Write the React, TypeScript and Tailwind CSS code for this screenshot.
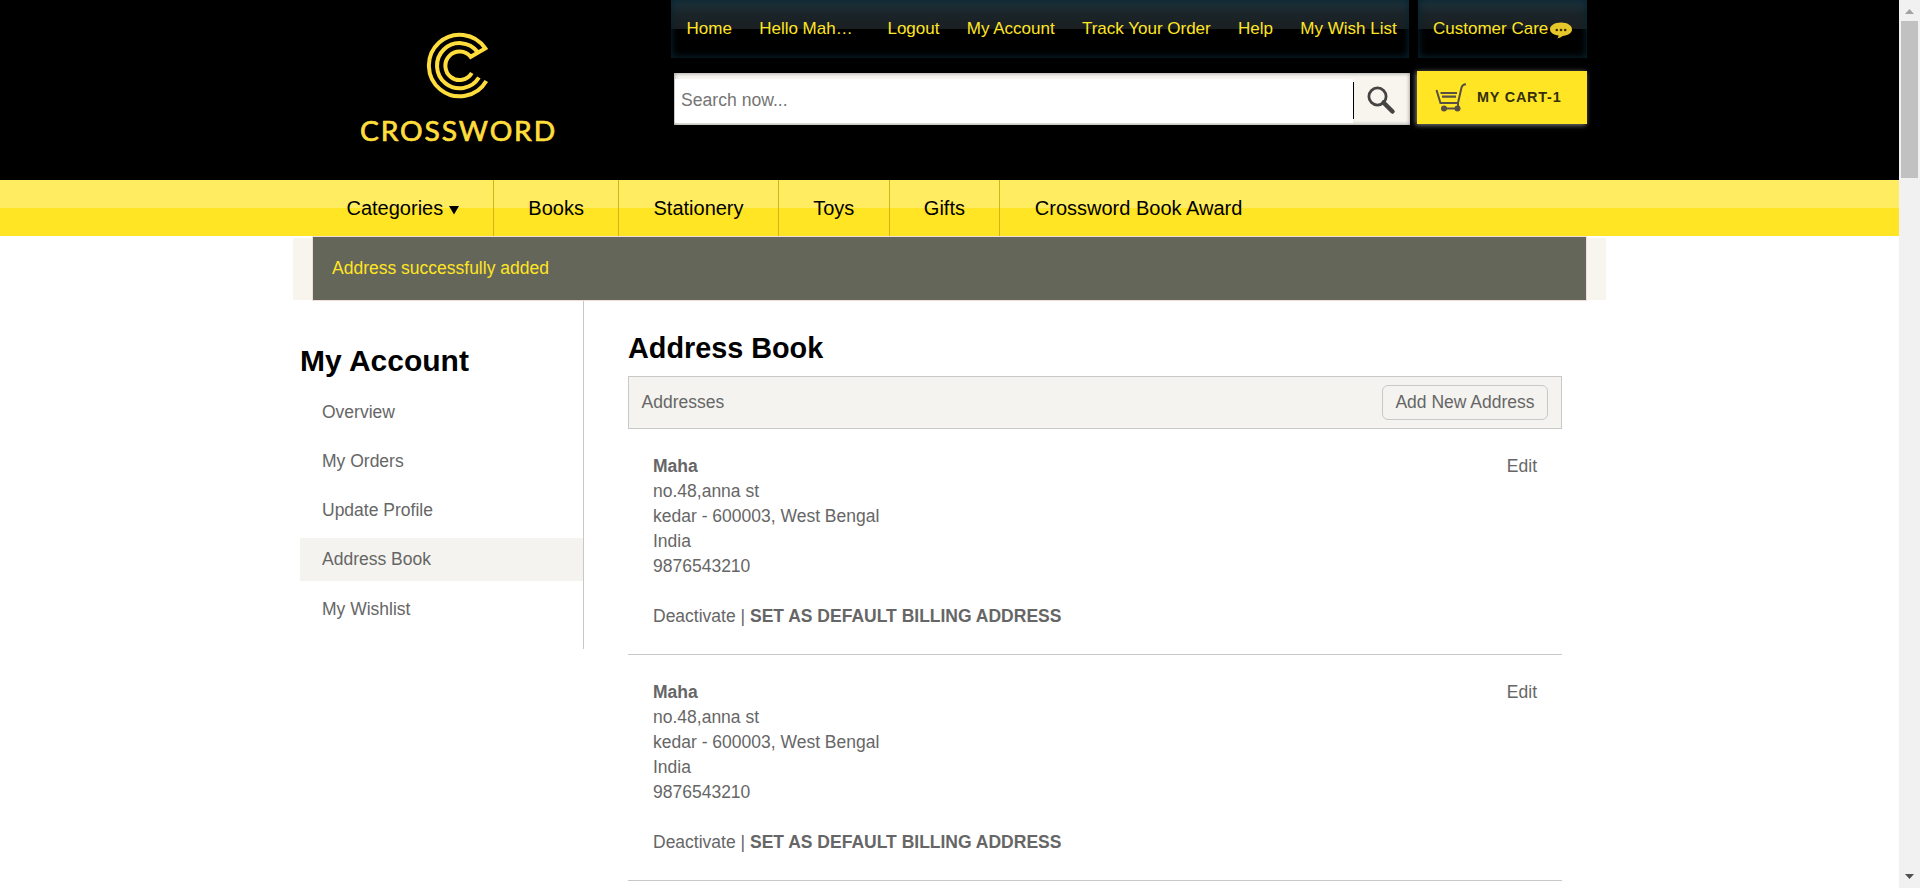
import React from "react";

const topLinks = ["Logout", "My Account", "Track Your Order", "Help", "My Wish List"];
const categories = ["Books", "Stationery", "Toys", "Gifts"];
const accountLinks = ["Overview", "My Orders", "Update Profile", "Address Book", "My Wishlist"];
const addresses = [1, 2];

const glossy =
  "bg-[linear-gradient(#1f353e_0px,#1a2429_14px,#1a1f21_29px,#000_29px)] shadow-[inset_0_0_7px_1px_#06232f]";

function Logo() {
  return (
    <div className="ml-[359px] flex w-[199px] flex-col items-center pt-8">
      <svg width="68" height="68" viewBox="426 32 68 68" fill="none" stroke="#ffdd3c" strokeWidth="4" className="ml-0.5">
        <path d="M486.3 81A30.8 30.8 0 1 1 485.3 48.4L470.6 56.8A14.2 14.2 0 1 0 471.8 73" />
        <path d="M478.9 77.5A22.6 22.6 0 1 1 477.6 52" />
      </svg>
      <svg width="199" height="36" viewBox="0 0 199 36" className="mt-3">
        <text x="1" y="28.600" textLength="197" lengthAdjust="spacingAndGlyphs" fill="#ffdd3c" stroke="#ffdd3c" strokeWidth="0.7" className="font-['Lato',sans-serif] text-[27px] tracking-[1.800px]">
          CROSSWORD
        </text>
      </svg>
    </div>
  );
}

function TopLinks() {
  return (
    <div className="flex gap-[9px] text-[17px] leading-5 text-[#ffe524]">
      <nav className={`flex h-[58px] w-[738px] gap-[27.300px] whitespace-nowrap pl-[15.500px] pt-[19px] ${glossy}`}>
        <a>Home</a>
        <a className="w-[101px]">Hello Mah…</a>
        {topLinks.map((l) => (
          <a key={l}>{l}</a>
        ))}
      </nav>
      <div className={`flex h-[58px] w-[169px] whitespace-nowrap pl-[15px] pt-[19px] ${glossy}`}>
        <span>Customer Care</span>
        <svg width="24" height="18" viewBox="0 0 24 18" className="ml-px mt-[3px]">
          <path d="M12 .5c6.300 0 11 2.900 11 6.800s-4.400 6.300-9.500 6.600c-1.500 1.400-3 2-5.300 2.500 1-.8 1.400-1.800 1.300-2.900C4.700 13 1 10.800 1 7.300 1 3.400 5.700.5 12 .5z" fill="#e5c62b" />
          <circle cx="7.800" cy="8" r="1.300" fill="#3a3000" />
          <circle cx="12" cy="8" r="1.300" fill="#3a3000" />
          <circle cx="16.200" cy="8" r="1.300" fill="#3a3000" />
        </svg>
      </div>
    </div>
  );
}

function SearchRow() {
  return (
    <div className="mt-[13px] flex pl-[3px]">
      <div className="mt-0.5 flex h-[52px] w-[736px] bg-[#f7f5ee] pb-0.5 pl-px pt-1.5 shadow-[inset_0_0_4px_#888]">
        <div className="flex w-[678px] items-center bg-white pl-[6px] pb-0.5 text-[17.6px] text-[#757575]">Search now...</div>
        <div className="mt-[3px] h-[37px] w-px bg-black" />
        <svg width="34" height="34" viewBox="0 0 34 34" fill="none" stroke="#444" className="ml-[10px] mt-[3px]">
          <circle cx="13.500" cy="14.500" r="8.600" strokeWidth="2.800" />
          <path d="M19.500 20.500L28.500 29.500" strokeWidth="4.500" strokeLinecap="round" />
        </svg>
      </div>
      <a className="ml-[7px] flex h-[53px] w-[170px] bg-[#ffe524] pl-[18px] pt-3 shadow-[-1px_1px_5px_#888]">
        <svg width="32" height="30" viewBox="0 0 32 30" fill="none" stroke="#574f45" strokeWidth="2">
          <path d="M31 1.200C28 1.300 27 2.500 26.400 5L23 20H5.500L1.500 7" />
          <path d="M5.500 10H22M7 13.700H21" strokeWidth="2.200" />
          <path d="M23 20V25M9 25.500H23" />
          <circle cx="9" cy="25.500" r="3" fill="#574f45" stroke="none" />
          <circle cx="22.500" cy="25.500" r="3" fill="#574f45" stroke="none" />
        </svg>
        <span className="ml-[10px] mt-1 whitespace-nowrap text-[14.400px] font-bold leading-5 tracking-[0.8px] text-[#333009]">MY CART-1</span>
      </a>
    </div>
  );
}

function Address() {
  return (
    <div className="flex justify-between border-b border-[#c8c8c8] px-[25px] py-[25px] leading-[25px]">
      <div>
        <p className="font-bold">Maha</p>
        <p>no.48,anna st</p>
        <p>kedar - 600003, West Bengal</p>
        <p>India</p>
        <p>9876543210</p>
        <p className="mt-[25px]">
          Deactivate | <b>SET AS DEFAULT BILLING ADDRESS</b>
        </p>
      </div>
      <a>Edit</a>
    </div>
  );
}

export default function App() {
  return (
    <div className="flex h-[888px] w-[1920px] overflow-hidden bg-white font-['Liberation_Sans',Arial,sans-serif] text-[17.500px] text-[#666]">
      <div className="w-[1899px]">
        <header className="flex h-[180px] bg-black">
          <Logo />
          <div className="ml-[113px]">
            <TopLinks />
            <SearchRow />
          </div>
        </header>

        <nav className="flex h-14 bg-[linear-gradient(#ffec61_50%,#ffe524_50%)] pl-[311px] text-[20px] leading-[56px] text-black">
          <a className="flex w-[183px] items-center border-r border-[#cdb616] pl-[35.500px]">
            Categories
            <svg width="10" height="9" viewBox="0 0 10 9" className="ml-[6px] mt-1">
              <path d="M0 0H10L5 8.500z" />
            </svg>
          </a>
          {categories.map((c) => (
            <a key={c} className="border-r border-[#cdb616] px-[34.300px]">{c}</a>
          ))}
          <a className="px-[34.500px]">Crossword Book Award</a>
        </nav>

        <div className="ml-[293px] flex h-[65px] w-[1313px] bg-[linear-gradient(#fff_2px,#f8f5ee_2px,#f8f5ee_64px,#fff_64px)] pl-[19px]">
          <div className="flex w-[1275px] items-center border border-[#f2dcdc] bg-[#646659] pl-[19px] text-[#ffe524]">
            Address successfully added
          </div>
        </div>

        <main className="flex pl-[300px]">
          <aside className="h-[348px] w-[284px] border-r border-[#c8c8c8]">
            <h2 className="mt-[42px] text-[30px] font-bold leading-[36px] text-black">My Account</h2>
            <ul className="mt-[12px]">
              {accountLinks.map((l) => (
                <li
                  key={l}
                  className={`mb-[6px] flex h-[43px] items-center pl-[22px] last:pt-px ${l === "Address Book" ? "bg-[#f4f3ef]" : ""}`}
                >
                  {l}
                </li>
              ))}
            </ul>
          </aside>
          <section className="ml-11 w-[934px]">
            <h1 className="mt-[29px] h-[46px] text-[28.800px] font-bold leading-[36px] text-black">Address Book</h1>
            <div className="flex h-[53px] items-center justify-between border border-[#c8c8c8] bg-[#f4f3ef] pl-[12.500px] pr-[13px]">
              <span>Addresses</span>
              <button className="h-[35px] w-[166px] whitespace-nowrap rounded-[6px] border border-[#c8c8c8]">Add New Address</button>
            </div>
            {addresses.map((a) => (
              <Address key={a} />
            ))}
          </section>
        </main>
      </div>

      <div className="flex w-[21px] flex-col items-center bg-[#f1f1f1]">
        <svg width="9" height="5" viewBox="0 0 9 5" className="mt-[9px]">
          <path d="M4.500 0L9 5H0z" fill="#a3a3a3" />
        </svg>
        <div className="mt-[7px] h-[157px] w-[17px] bg-[#c1c1c1]" />
        <svg width="9" height="5" viewBox="0 0 9 5" className="mb-[9px] mt-auto">
          <path d="M0 0H9L4.500 5z" fill="#505050" />
        </svg>
      </div>
    </div>
  );
}
